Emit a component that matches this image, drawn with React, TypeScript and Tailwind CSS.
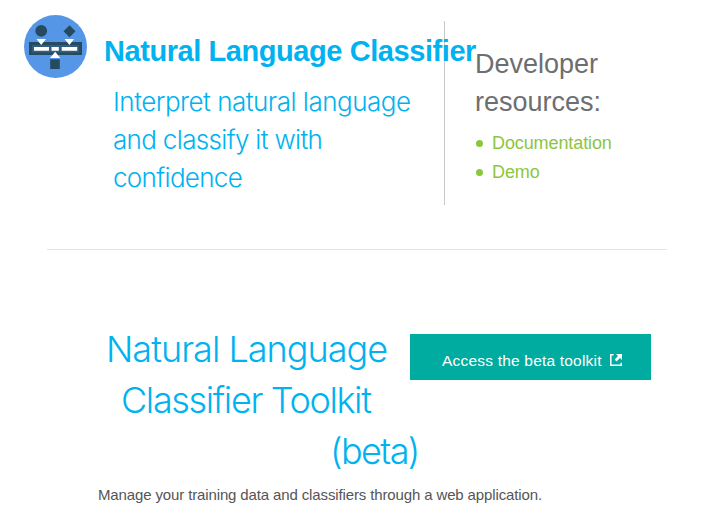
function ClassifierLogo() {
  return (
    <svg className="block h-[63px] w-[63px] shrink-0" viewBox="0 0 63 63">
      <circle cx="31.5" cy="31.5" r="31.5" fill="#5596e6" />
      <circle cx="17.2" cy="15.9" r="5.9" fill="#264a60" />
      <path d="M45.5 10.3l6 6-6 6-6-6z" fill="#264a60" />
      <path d="M5 27h53v13H5z" fill="#264a60" />
      <path d="M8 30h47v7.5H8z" fill="#325c80" />
      <path d="M10 32h15v3.7H10zM27.5 32h7.3v3.7h-7.3zM37.7 32h15.5v3.7H37.7z" fill="#fff" />
      <path d="M12.5 24h9.5l-4.8 6zM40.6 24h9.5l-4.7 6zM26 43h10.3l-5.1-6.2z" fill="#fff" />
      <path d="M26.2 44.3h9.6v9.6h-9.6z" fill="#264a60" />
    </svg>
  );
}

function ExternalIcon() {
  return (
    <svg className="ml-2 block h-3 w-3 shrink-0" viewBox="0 0 12 12" fill="none">
      <path d="M3.5 .8H.8v10.4h10.4V8.7" stroke="#fff" strokeWidth="1.5" />
      <path d="M6 0h6v6l-2-2-3.5 3.4-1.8-1.8L8 2z" fill="#fff" />
    </svg>
  );
}

export default function App() {
  return (
    <div className="h-[521px] w-[716px] overflow-hidden bg-white font-['Liberation_Sans',Arial,sans-serif]">
      <header className="flex h-[249px] items-start">
        <div className="flex w-[444px] shrink-0 pl-6 pt-[15px]">
          <ClassifierLogo />
          <div className="ml-[17px] w-[339px] shrink-0">
            <h1 className="relative z-10 mt-4 whitespace-nowrap text-[29px] font-bold leading-10 tracking-[-0.43px] text-[#00b2ef]">
              Natural Language Classifier
            </h1>
            <p className="ml-[9px] mt-3 whitespace-nowrap font-['Inter'] text-[26px] font-[260] leading-[38px] text-[#00b2ef]">
              <span className="block tracking-[-0.49px]">Interpret natural language</span>
              <span className="block tracking-[-0.67px]">and classify it with</span>
              <span className="block tracking-[-0.68px]">confidence</span>
            </p>
          </div>
        </div>
        <aside className="mt-[21px] h-[184px] border-l border-[#c8c8c8] pl-[30px] pt-[24px]">
          <h2 className="text-[27px] leading-[38px] text-[#6d6e70]">
            Developer
            <br />
            resources:
          </h2>
          <ul className="mt-[8px] text-[18px] leading-[29px] tracking-[-0.1px] text-[#8cc63f]">
            {["Documentation", "Demo"].map((label) => (
              <li key={label} className="flex items-center">
                <span className="ml-[1px] mr-[9px] h-[7px] w-[7px] rounded-full bg-[#8cc63f]" />
                <a>{label}</a>
              </li>
            ))}
          </ul>
        </aside>
      </header>
      <main className="mx-[47px] w-[620px] border-t border-[#e4e4e4]">
        <div className="flex items-start pt-[74px]">
          <h2 className="w-[363px] shrink-0 whitespace-nowrap font-['Inter'] text-[36px] font-[260] leading-[51px] text-[#00b2ef]">
            <span className="block pl-[59px] tracking-[-0.98px]">Natural Language</span>
            <span className="block pl-[74px] tracking-[-1.36px]">Classifier Toolkit</span>
            <span className="block pl-[283px] tracking-[-1.6px]">(beta)</span>
          </h2>
          <button className="mt-[10px] flex h-[46px] w-[241px] shrink-0 items-center whitespace-nowrap bg-[#00ab9f] pl-8 pt-[6px] text-[15.5px] tracking-[0.2px] text-white">
            <span className="pt-px">Access the beta toolkit</span>
            <ExternalIcon />
          </button>
        </div>
        <p className="ml-[51px] mt-[6px] whitespace-nowrap text-[15px] leading-6 tracking-[-0.13px] text-[#555]">
          Manage your training data and classifiers through a web application.
        </p>
      </main>
    </div>
  );
}
